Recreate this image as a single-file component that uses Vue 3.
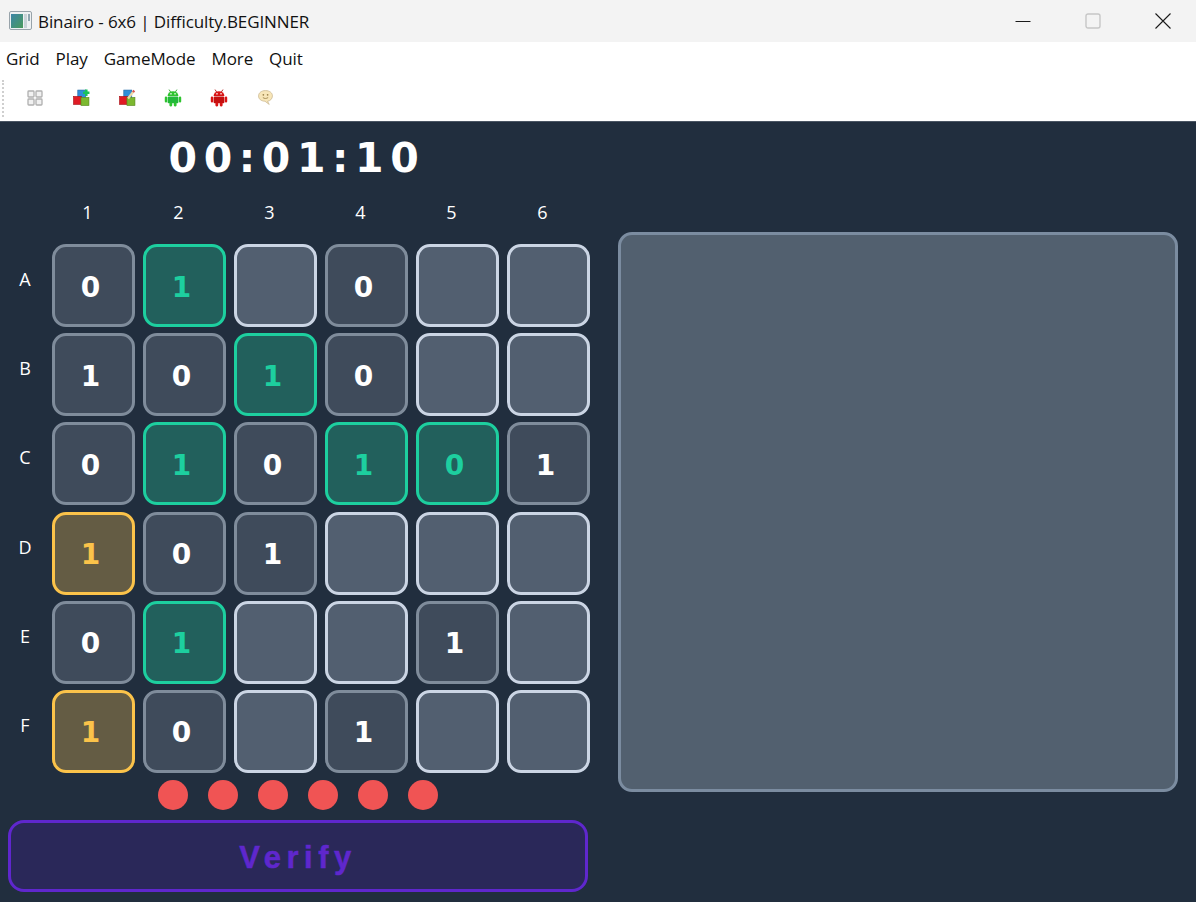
<script setup>
const menus = ["Grid", "Play", "GameMode", "More", "Quit"];
const cols = [1, 2, 3, 4, 5, 6];

// each row: value + state (g = green, y = yellow, "" = normal)
const rows = [
  { name: "A", cells: [["0", ""], ["1", "g"], null, ["0", ""], null, null] },
  { name: "B", cells: [["1", ""], ["0", ""], ["1", "g"], ["0", ""], null, null] },
  { name: "C", cells: [["0", ""], ["1", "g"], ["0", ""], ["1", "g"], ["0", "g"], ["1", ""]] },
  { name: "D", cells: [["1", "y"], ["0", ""], ["1", ""], null, null, null] },
  { name: "E", cells: [["0", ""], ["1", "g"], null, null, ["1", ""], null] },
  { name: "F", cells: [["1", "y"], ["0", ""], null, ["1", ""], null, null] },
];

const cellClass = (cell) => {
  if (!cell) return "empty";
  if (cell[1] === "g") return "green";
  if (cell[1] === "y") return "yellow";
  return "filled";
};
</script>

<template>
  <div class="window">
    <div class="titlebar">
      <svg class="appicon" width="24" height="20" viewBox="0 0 24 20">
        <defs>
          <linearGradient id="pane" x1="0" y1="0" x2="1" y2="1">
            <stop offset="0" stop-color="#3c86a8" />
            <stop offset="1" stop-color="#4a9a5c" />
          </linearGradient>
        </defs>
        <rect x="0.5" y="0.5" width="22" height="18" rx="1.5" fill="#eef1f3" stroke="#98a3aa" />
        <rect x="2" y="3" width="12" height="14" fill="url(#pane)" />
        <rect x="15" y="3" width="3" height="14" fill="#c9d3d8" />
        <rect x="19" y="3" width="2" height="7" fill="#8fa6b0" />
      </svg>
      <span class="title">Binairo - 6x6 | Difficulty.BEGINNER</span>
      <div class="winbtns">
        <svg width="16" height="16" viewBox="0 0 16 16"><path d="M0.5 8.5h15" stroke="#1a1a1a" fill="none" /></svg>
        <svg width="16" height="16" viewBox="0 0 16 16"><rect x="1" y="1" width="14" height="14" rx="2" fill="none" stroke="#c6c6c6" stroke-width="1.4" /></svg>
        <svg width="16" height="16" viewBox="0 0 16 16"><path d="M0.5 0.5l15 15M15.5 0.5l-15 15" stroke="#1a1a1a" stroke-width="1.1" fill="none" /></svg>
      </div>
    </div>

    <div class="menubar">
      <span v-for="m in menus" :key="m" class="menu">{{ m }}</span>
    </div>

    <div class="toolbar">
      <div class="grip"></div>
      <div class="tool">
        <svg width="16" height="16" viewBox="0 0 16 16">
          <g fill="#f1f1f1" stroke="#b0b0b0" stroke-width="1.3">
            <rect x="1" y="1" width="6" height="6" rx="0.8" />
            <rect x="9" y="1" width="6" height="6" rx="0.8" />
            <rect x="1" y="9" width="6" height="6" rx="0.8" />
            <rect x="9" y="9" width="6" height="6" rx="0.8" />
          </g>
        </svg>
      </div>
      <div class="tool">
        <svg width="17" height="17" viewBox="0 0 16 16">
          <rect x="4.5" y="1" width="7.5" height="7" fill="#2f8fd8" stroke="#1f6aa8" stroke-width="0.6" />
          <rect x="0.5" y="7" width="7.5" height="7.5" fill="#e01b24" stroke="#a81218" stroke-width="0.6" />
          <rect x="7.5" y="8" width="7.5" height="7.5" fill="#7cb82f" stroke="#55881c" stroke-width="0.6" />
          <path d="M9.5 3.5h6M12.500 0.500v6" stroke="#19c25a" stroke-width="2.4" fill="none" />
        </svg>
      </div>
      <div class="tool">
        <svg width="17" height="17" viewBox="0 0 16 16">
          <rect x="4.5" y="1" width="7.5" height="7" fill="#2f8fd8" stroke="#1f6aa8" stroke-width="0.6" />
          <rect x="0.5" y="7" width="7.5" height="7.5" fill="#e01b24" stroke="#a81218" stroke-width="0.6" />
          <rect x="7.5" y="8" width="7.5" height="7.5" fill="#7cb82f" stroke="#55881c" stroke-width="0.6" />
          <path d="M8.5 9l5-6.5" stroke="#ecd9a8" stroke-width="2.2" fill="none" />
          <path d="M13.2 2.9l1.100-1.500" stroke="#d9534f" stroke-width="2.2" fill="none" />
        </svg>
      </div>
      <div class="tool">
        <svg width="18" height="18" viewBox="0 0 16 16">
          <path d="M4.5 0.5l1.400 2.200M11.500 0.500l-1.400 2.200" stroke="#2da52d" stroke-width="0.8" fill="none" />
          <path d="M3.2 6.2a4.800 4.300 0 0 1 9.600 0z" fill="#2fc42f" />
          <rect x="3.2" y="6.7" width="9.6" height="6" rx="1" fill="#22b83a" />
          <rect x="0.7" y="6.7" width="2.1" height="5.4" rx="1" fill="#2fc42f" />
          <rect x="13.2" y="6.7" width="2.1" height="5.4" rx="1" fill="#2fc42f" />
          <rect x="4.8" y="12" width="2.5" height="3.5" rx="1" fill="#2fc42f" />
          <rect x="8.7" y="12" width="2.5" height="3.5" rx="1" fill="#2fc42f" />
          <circle cx="6.2" cy="4.3" r="0.7" fill="#fff" />
          <circle cx="9.8" cy="4.3" r="0.7" fill="#fff" />
        </svg>
      </div>
      <div class="tool">
        <svg width="18" height="18" viewBox="0 0 16 16">
          <path d="M4.5 0.5l1.400 2.200M11.500 0.500l-1.400 2.200" stroke="#b01010" stroke-width="0.8" fill="none" />
          <path d="M3.2 6.2a4.800 4.300 0 0 1 9.600 0z" fill="#d81414" />
          <rect x="3.2" y="6.7" width="9.6" height="6" rx="1" fill="#c40e0e" />
          <rect x="0.7" y="6.7" width="2.1" height="5.4" rx="1" fill="#d81414" />
          <rect x="13.2" y="6.7" width="2.1" height="5.4" rx="1" fill="#d81414" />
          <rect x="4.8" y="12" width="2.5" height="3.5" rx="1" fill="#d81414" />
          <rect x="8.7" y="12" width="2.5" height="3.5" rx="1" fill="#d81414" />
          <circle cx="6.2" cy="4.3" r="0.7" fill="#fff" />
          <circle cx="9.8" cy="4.3" r="0.7" fill="#fff" />
        </svg>
      </div>
      <div class="tool">
        <svg width="17" height="17" viewBox="0 0 16 16">
          <path d="M8 1.5c3.8 0 6.5 2.1 6.5 5s-2.3 4.8-4.6 5l1.6 3-4-3C3.6 11.3 1.500 9.400 1.500 6.500s2.700-5 6.500-5z" fill="#f8e6b8" stroke="#cfbd98" stroke-width="0.8" />
          <circle cx="6" cy="5.5" r="0.8" fill="#9b8148" />
          <circle cx="10" cy="5.5" r="0.8" fill="#9b8148" />
          <path d="M5.5 8c1.300 1.200 3.500 1.200 5 0" stroke="#9b8148" stroke-width="0.8" fill="none" />
        </svg>
      </div>
    </div>

    <div class="main">
      <div class="left">
        <div class="timer">00:01:10</div>
        <div class="grid">
          <div></div>
          <div v-for="c in cols" :key="c" class="colhead">{{ c }}</div>
          <template v-for="r in rows" :key="r.name">
            <div class="rowhead">{{ r.name }}</div>
            <div v-for="(cell, i) in r.cells" :key="i" class="cell" :class="cellClass(cell)">
              {{ cell ? cell[0] : "" }}
            </div>
          </template>
        </div>
        <div class="dots">
          <span v-for="c in cols" :key="c" class="dot"></span>
        </div>
        <button class="verify">Verify</button>
      </div>
      <div class="right">
        <div class="panel"></div>
      </div>
    </div>
  </div>
</template>

<style>
html,
body {
  margin: 0;
  background: #212e3e;
}
</style>

<style scoped>
.window {
  width: 1196px;
  height: 902px;
  display: flex;
  flex-direction: column;
  overflow: hidden;
  font-family: "Open Sans", "Noto Sans", sans-serif;
}
.titlebar {
  height: 42px;
  background: #f3f3f3;
  display: flex;
  align-items: center;
  padding-left: 9px;
  color: #111;
}
.appicon {
  margin-right: 5px;
}
.title {
  font-size: 17px;
  letter-spacing: -0.1px;
}
.winbtns {
  margin-left: auto;
  display: flex;
  gap: 54px;
  padding-right: 25px;
}
.menubar {
  height: 34px;
  box-sizing: border-box;
  padding: 0 0 2px 6px;
  background: #fff;
  display: flex;
  align-items: center;
  gap: 16px;
  font-size: 17px;
  letter-spacing: -0.1px;
  color: #111;
}
.toolbar {
  height: 45px;
  background: #fff;
  display: flex;
  align-items: center;
  border-bottom: 1px solid #4a5563;
}
.grip {
  width: 0;
  height: 37px;
  margin-left: 2px;
  border-left: 2px dotted #cfcfcf;
  margin-right: 8px;
}
.tool {
  width: 46px;
  display: flex;
  justify-content: center;
  padding-bottom: 2px;
}
.main {
  flex: 1;
  background: #212e3e;
  display: flex;
  min-height: 0;
}
.left {
  width: 596px;
  padding-left: 8px;
  box-sizing: border-box;
}
.timer {
  width: 578px;
  text-align: center;
  font-family: "DejaVu Sans", sans-serif;
  font-weight: 700;
  font-size: 41px;
  letter-spacing: 6.6px;
  line-height: 48px;
  margin-top: 12px;
  color: #fff;
}
.grid {
  margin-left: -8px;
  margin-top: 16px;
  display: grid;
  grid-template-columns: 44px repeat(6, 83px);
  grid-template-rows: 40px repeat(6, 83px);
  column-gap: 8px;
  row-gap: 6.15px;
  color: #fff;
}
.colhead {
  font-size: 18px;
  text-align: center;
  padding-right: 12px;
  line-height: 29px;
}
.rowhead {
  font-size: 18px;
  padding-left: 6px;
  text-align: center;
  align-self: center;
  padding-bottom: 13px;
}
.cell {
  box-sizing: border-box;
  border: 3px solid;
  border-radius: 14px;
  display: flex;
  align-items: center;
  justify-content: center;
  font-family: "DejaVu Sans", sans-serif;
  font-weight: 700;
  font-size: 28px;
  padding: 3px 6px 0 0;
}
.filled {
  background: #3f4b5b;
  border-color: #7f8c9b;
  color: #fff;
}
.empty {
  background: #525f70;
  border-color: #cbd5e4;
}
.green {
  background: #22605c;
  border-color: #1dcf9f;
  color: #1dcf9f;
}
.yellow {
  background: #645c44;
  border-color: #fbc34a;
  color: #fbc34a;
}
.dots {
  display: flex;
  gap: 20px;
  margin: 7px 0 0 150px;
}
.dot {
  width: 30px;
  height: 30px;
  border-radius: 50%;
  background: #f05454;
}
.verify {
  display: block;
  width: 580px;
  height: 72px;
  margin-top: 10px;
  box-sizing: border-box;
  background: #2a2859;
  border: 3px solid #5f27cd;
  border-radius: 16px;
  color: #5f27cd;
  font-family: "Liberation Sans", sans-serif;
  font-weight: 700;
  font-size: 31px;
  letter-spacing: 5.5px;
  -webkit-text-stroke: 0.5px #5f27cd;
  padding: 4px 0 0;
}
.right {
  flex: 1;
  padding: 110px 0 0 22px;
}
.panel {
  width: 560px;
  height: 560px;
  box-sizing: border-box;
  background: #52606f;
  border: 3px solid #7b8ca0;
  border-radius: 14px;
}
</style>
